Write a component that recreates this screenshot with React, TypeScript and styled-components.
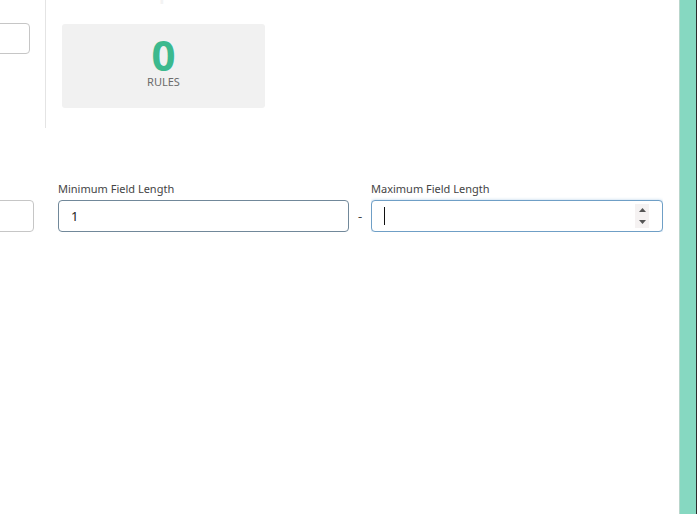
import React from "react";
import styled, { createGlobalStyle } from "styled-components";

const Global = createGlobalStyle`
  html, body { margin: 0; padding: 0; background: #fff; }
  body { font-family: "Noto Sans", "Open Sans", Arial, sans-serif; color: #333; overflow: hidden; }
  #root { height: 514px; }
`;

const Page = styled.div`
  display: flex;
  height: 514px;
  width: 697px;
`;

const Main = styled.div`
  flex: 1;
  display: flex;
  flex-direction: column;
  overflow: hidden;
`;

const SideRail = styled.div`
  width: 18px;
  background: #86d8c1;
  border-left: 1px solid #b9d6cc;
  border-right: 1px solid #2c2c2c;
  box-sizing: border-box;
`;

const TopRow = styled.div`
  display: flex;
  align-items: flex-start;
`;

const LeftPane = styled.div`
  width: 46px;
  height: 128px;
  border-right: 1px solid #e4e4e4;
  box-shadow: -5px 0 0 -4px #f1f1f1;
  padding-top: 23px;
  box-sizing: border-box;
  overflow: hidden;
`;

const GhostField = styled.div<{ $w: number; $shift: number; $h: number }>`
  width: ${(p) => p.$w}px;
  height: ${(p) => p.$h}px;
  margin-left: ${(p) => -p.$shift}px;
  border: 1px solid #c6c6c6;
  border-radius: 4px;
  box-sizing: border-box;
`;

const Summary = styled.div`
  display: flex;
  flex-direction: column;
  margin-left: 16px;
`;

/* Section title scrolled mostly out of view above the card */
const Heading = styled.h2`
  margin: -18px 0 22px 1px;
  font-size: 20px;
  line-height: 20px;
  height: 20px;
  font-weight: 600;
  color: #f3f3f3;
  white-space: nowrap;
`;

const StatCard = styled.div`
  width: 203px;
  height: 84px;
  background: #f1f1f1;
  border-radius: 3px;
  display: flex;
  flex-direction: column;
  align-items: center;
  box-sizing: border-box;
  padding-top: 10px;
`;

const StatValue = styled.div`
  font-size: 42px;
  line-height: 42px;
  font-weight: 700;
  color: #3cb98e;
`;

const StatLabel = styled.div`
  font-size: 11px;
  line-height: 12px;
  color: #6b6b6b;
`;

const FieldRow = styled.div`
  display: flex;
  align-items: flex-end;
  margin-top: 54px;
`;

const Column = styled.div<{ $w: number }>`
  width: ${(p) => p.$w}px;
  display: flex;
  flex-direction: column;
  overflow: hidden;
`;

const Label = styled.label`
  font-size: 11px;
  line-height: 14px;
  color: #444;
  margin-bottom: 4px;
  white-space: nowrap;
`;

const FieldWrap = styled.div`
  position: relative;
  height: 32px;
`;

const Input = styled.input<{ $focused?: boolean }>`
  width: 100%;
  height: 32px;
  box-sizing: border-box;
  border: 1px solid ${(p) => (p.$focused ? "#6f9fc6" : "#71889a")};
  border-radius: 4px;
  padding: 0 12px;
  font-family: "Noto Sans", "Open Sans", Arial, sans-serif;
  font-size: 13px;
  color: #222;
  background: #fff;
  outline: none;
  box-shadow: ${(p) => (p.$focused ? "0 0 3px rgba(102,160,210,0.5)" : "none")};
`;

const Caret = styled.span`
  position: absolute;
  left: 13px;
  top: 7px;
  width: 1px;
  height: 18px;
  background: #111;
`;

const Spinner = styled.div`
  position: absolute;
  right: 14px;
  top: 4px;
  width: 14px;
  height: 24px;
  background: #f5f2f2;
  display: flex;
  flex-direction: column;
  justify-content: space-between;
  align-items: center;
  padding: 4px 0;
  box-sizing: border-box;
`;

const Dash = styled.div`
  width: 22px;
  height: 32px;
  display: flex;
  align-items: center;
  justify-content: center;
  font-size: 13px;
  color: #444;
`;

const Arrow = ({ up }: { up?: boolean }) => (
  <svg width="7" height="4" viewBox="0 0 7 4">
    <path d={up ? "M0 4 L3.5 0 L7 4 Z" : "M0 0 L3.5 4 L7 0 Z"} fill="#555" />
  </svg>
);

export default function App() {
  return (
    <>
      <Global />
      <Page>
        <Main>
          <TopRow>
            <LeftPane>
              <GhostField $w={40} $shift={10} $h={31} />
            </LeftPane>
            <Summary>
              <Heading>Rule Groups</Heading>
              <StatCard>
                <StatValue>0</StatValue>
                <StatLabel>RULES</StatLabel>
              </StatCard>
            </Summary>
          </TopRow>
          <FieldRow>
            <Column $w={58}>
              <FieldWrap>
                <GhostField $w={44} $shift={10} $h={32} />
              </FieldWrap>
            </Column>
            <Column $w={291}>
              <Label>Minimum Field Length</Label>
              <FieldWrap>
                <Input type="text" defaultValue="1" readOnly />
              </FieldWrap>
            </Column>
            <Dash>-</Dash>
            <Column $w={292}>
              <Label>Maximum Field Length</Label>
              <FieldWrap>
                <Input type="text" defaultValue="" readOnly $focused />
                <Caret />
                <Spinner>
                  <Arrow up />
                  <Arrow />
                </Spinner>
              </FieldWrap>
            </Column>
          </FieldRow>
        </Main>
        <SideRail />
      </Page>
    </>
  );
}
